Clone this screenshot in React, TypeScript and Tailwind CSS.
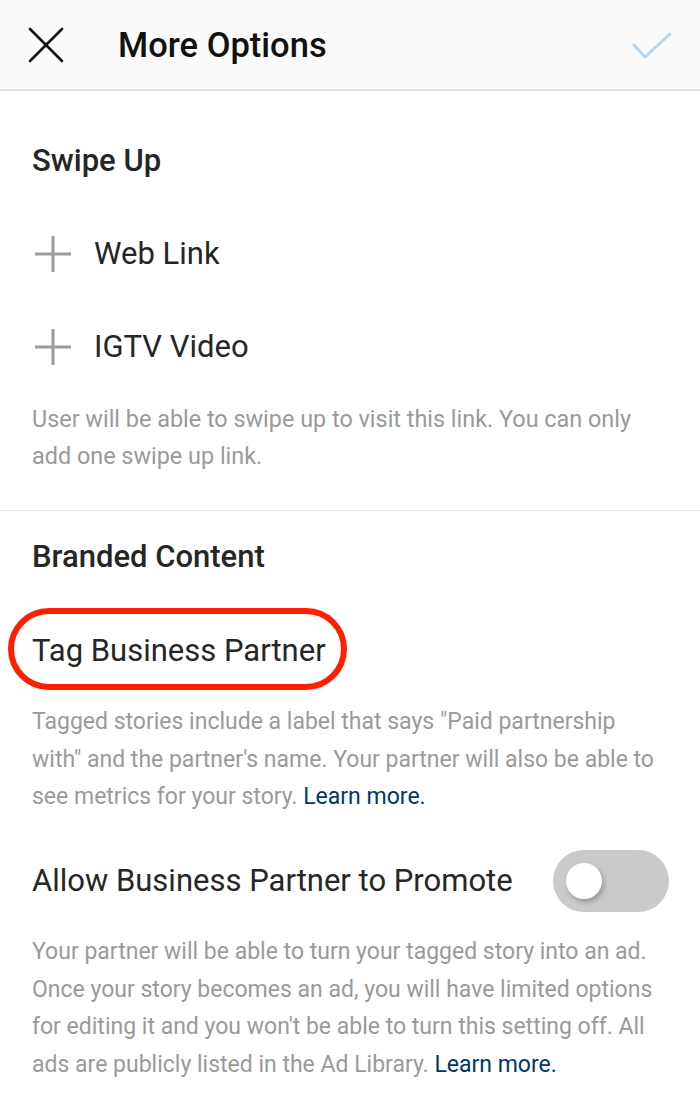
import React from 'react';

const CloseIcon = () => (
  <svg width="36" height="36" viewBox="0 0 36 36" fill="none">
    <path d="M2 2 L34 34 M34 2 L2 34" stroke="#111" strokeWidth="2.6" strokeLinecap="round" />
  </svg>
);

const CheckIcon = () => (
  <svg width="40" height="28" viewBox="0 0 40 28" fill="none">
    <path d="M2 13 L13 25 L38 2" stroke="#b6d5f2" strokeWidth="3" strokeLinecap="round" strokeLinejoin="round" />
  </svg>
);

const PlusIcon = () => (
  <svg width="38" height="38" viewBox="0 0 38 38" fill="none">
    <path d="M19 1 V37 M1 19 H37" stroke="#9b9b9b" strokeWidth="3" />
  </svg>
);

const Toggle = () => (
  <div className="w-[116px] h-[62px] rounded-full bg-[#cacaca] flex items-center pl-[13px]">
    <div className="w-[36px] h-[36px] rounded-full bg-white shadow-[2px_3px_5px_rgba(0,0,0,0.25)]"></div>
  </div>
);

const App: React.FC = () => {
  return (
    <div className="w-[700px] min-h-[1109px] bg-white font-['Roboto',sans-serif] text-[#262626]">
      {/* Top bar */}
      <div className="h-[91px] bg-[#fafafa] border-b-2 border-[#e2e2e2] flex items-center pl-[28px] pr-[28px]">
        <CloseIcon />
        <div className="ml-[54px] text-[34.5px] font-medium leading-[40px] text-[#111]">More Options</div>
        <div className="ml-auto mt-[2px]">
          <CheckIcon />
        </div>
      </div>

      {/* Swipe up */}
      <div className="px-[32px] pb-[35px] border-b border-[#e6e6e6]">
        <div className="pt-[52px] text-[31px] font-medium leading-[36px]">Swipe Up</div>
        <div className="mt-[28px] h-[93px] flex items-center">
          <div className="ml-[2px]"><PlusIcon /></div>
          <span className="ml-[22px] text-[31px] leading-[36px]">Web Link</span>
        </div>
        <div className="h-[93px] flex items-center">
          <div className="ml-[2px]"><PlusIcon /></div>
          <span className="ml-[22px] text-[31px] leading-[36px]">IGTV Video</span>
        </div>
        <p className="mt-[8px] text-[23.4px] leading-[37px] text-[#9a9a9a] whitespace-nowrap">
          User will be able to swipe up to visit this link. You can only<br />
          add one swipe up link.
        </p>
      </div>

      {/* Branded content */}
      <div className="px-[32px]">
        <div className="pt-[28px] text-[31px] font-medium leading-[36px]">Branded Content</div>
        <div className="mt-[58px]">
          <span className="relative inline-block text-[31px] leading-[36px]">
            Tag Business Partner
            <span className="absolute left-[-24px] top-[-25px] w-[339px] h-[82px] rounded-full border-[6px] border-[#ff1f00]"></span>
          </span>
        </div>
        <p className="mt-[34px] text-[23px] leading-[37.5px] text-[#9a9a9a] whitespace-nowrap">
          Tagged stories include a label that says "Paid partnership<br />
          with" and the partner's name. Your partner will also be able to<br />
          see metrics for your story. <span className="text-[#00376b]">Learn more.</span>
        </p>
        <div className="mt-[34.5px] h-[62px] flex items-center justify-between">
          <span className="text-[31px] leading-[36px]">Allow Business Partner to Promote</span>
          <div className="-mr-[1px]"><Toggle /></div>
        </div>
        <p className="mt-[21px] text-[23px] leading-[37.5px] text-[#9a9a9a] whitespace-nowrap">
          Your partner will be able to turn your tagged story into an ad.<br />
          Once your story becomes an ad, you will have limited options<br />
          for editing it and you won't be able to turn this setting off. All<br />
          ads are publicly listed in the Ad Library. <span className="text-[#00376b]">Learn more.</span>
        </p>
      </div>
    </div>
  );
};

export default App;
